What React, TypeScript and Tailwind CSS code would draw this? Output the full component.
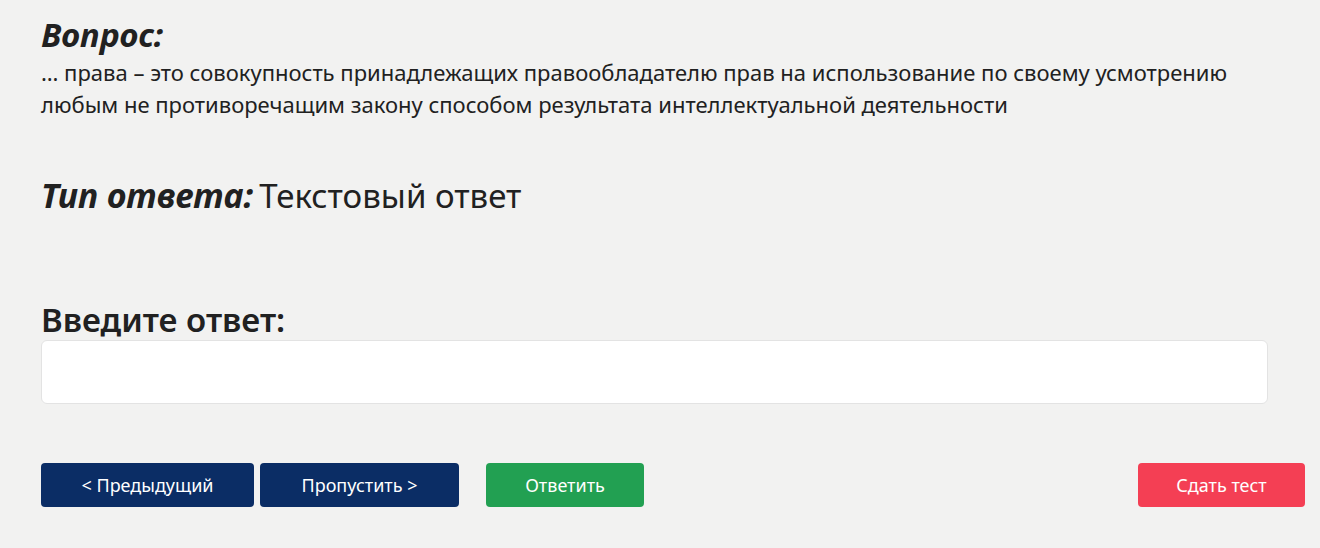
export default function App() {
  return (
    <div
      className="min-h-[548px] w-full bg-[#f2f2f1] text-[#212121] pl-[41px] pr-[15px] pt-[15px]"
      style={{ fontFamily: '"Noto Sans", "Open Sans", sans-serif' }}
    >
      <h2 className="text-[33px] font-bold italic leading-[40px]">Вопрос:</h2>
      <p className="text-[22px] leading-[32px] mt-[1px] max-w-[1220px]">
        … права – это совокупность принадлежащих правообладателю прав на использование по своему усмотрению
        любым не противоречащим закону способом результата интеллектуальной деятельности
      </p>

      <div className="mt-[54px] flex items-baseline leading-[42px]">
        <span className="text-[34px] font-bold italic">Тип ответа:</span>
        <span className="ml-[6px] text-[33px]">Текстовый ответ</span>
      </div>

      <div className="mt-[82px] pr-[37px]">
        <label className="block text-[33px] font-semibold leading-[41px]">Введите ответ:</label>
        <input
          type="text"
          className="block w-full h-[64px] rounded-[6px] border border-[#e3e3e3] bg-white px-3 text-[20px] outline-none"
        />
      </div>

      <div className="mt-[59px] flex items-center text-[18px] text-white">
        <button className="h-[44px] w-[213px] rounded-[4px] bg-[#0b2d65]">&lt; Предыдущий</button>
        <button className="ml-[6px] h-[44px] w-[199px] rounded-[4px] bg-[#0b2d65]">Пропустить &gt;</button>
        <button className="ml-[27px] h-[44px] w-[158px] rounded-[4px] bg-[#22a052]">Ответить</button>
        <button className="ml-auto h-[44px] w-[167px] rounded-[4px] bg-[#f43f54]">Сдать тест</button>
      </div>
    </div>
  );
}
